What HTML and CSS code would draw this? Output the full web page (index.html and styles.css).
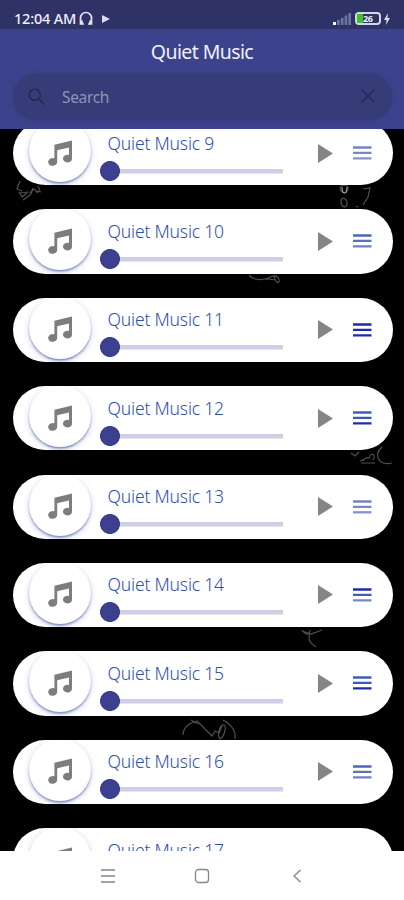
FILE: index.html
```
<!DOCTYPE html>
<html lang="en">
<head>
<meta charset="utf-8">
<title>Quiet Music</title>
<link rel="stylesheet" href="styles.css">
</head>
<body>
<svg class="defs" aria-hidden="true">
  <symbol id="note" viewBox="0 0 26 26"><path fill="#7d7d7d" d="M7.400 4.700 25 0.500V18.200a4.500 3.900 0 1 1-3-3.300V7.400L10.200 10.200V21.800A4.500 3.900 0 1 1 7.400 18.300Z"/></symbol>
  <symbol id="play" viewBox="0 0 15 19"><path fill="#858585" d="M0 0 15 9.500 0 19Z"/></symbol>
  <symbol id="menu" viewBox="0 0 19 14"><path class="l1" d="M0 1.500h18.500"/><path class="l2" d="M0 6.900h18.500"/><path class="l3" d="M0 12.300h18.500"/></symbol>
</svg>
<div class="phone">
  <header class="header">
    <div class="status">
      <span class="time">12:04 AM</span>
      <svg class="headset" viewBox="0 0 14 15"><path d="M5 13H1.500V7a5.500 5.500 0 0 1 11 0v6H9M3 9.500V13M11 9.500V13" fill="none" stroke="#e4e5f3" stroke-width="1.700"/></svg>
      <svg class="mini-play" viewBox="0 0 8 8"><path d="M0 0 8 4 0 8Z" fill="#d9daea"/></svg>
      <svg class="signal" viewBox="0 0 19 13"><path fill="#6f739f" d="M4 8h2.700v5H4zM7.800 6h2.700v7H7.800zM11.600 3.500h2.700V13h-2.700zM15.400 1H18v12h-2.600z"/><path fill="#fff" d="M0 10h3v3H0z"/></svg>
      <span class="battery"><span class="charge"></span><span class="percent">26</span></span>
      <svg class="bolt" viewBox="0 0 6 12"><path d="M4 0 0 7h2.500L2 12 6 5H3.500Z" fill="#d9daea"/></svg>
    </div>
    <h1 class="title">Quiet Music</h1>
    <div class="search">
      <svg class="search-icon" viewBox="0 0 18 18"><circle cx="6.800" cy="6.800" r="5.500"/><path d="m11 11 5.500 5.500"/></svg>
      <span class="placeholder">Search</span>
      <svg class="clear" viewBox="0 0 16 16"><path d="m1.500 1.500 13 13m0-13-13 13"/></svg>
    </div>
  </header>
  <main class="content">
    <svg class="doodles" viewBox="0 130 404 721">
      <path d="M20 181l-3 8 5 2m-3 1 3 5 5-4m-7 0 9-1m-6 8 7-5 2-5m-2 3 4-4 4 4m-5-5-2 6m5-3 5 1m-3-6 2 5"/>
      <path d="M340 188c0-4 9-4 8 1s-7 5-8-1m2 10c-4 8 6 13 5 4-1-5-5-3-5-4m14 8 2 1m5-18 7-1-2 9-5 8"/>
      <path class="bright" d="M342 187c0 8 5 8 5 0"/>
      <path d="M249 275c5 6 12 5 20 3m-3 2c7-6 12-5 13 0s-6 2-4-5m-7 4 8 1"/>
      <path d="m351 453 4 3 4-4m1 9c8-1 4-5 9-3 3-8 7-2 4 2m-12 3h14m7-16c-8 7-5 19 10 16"/>
      <path d="M302 630c4 6 8 5 8 0m-8 1 9 3 11-4m-12 3c-3 8 1 10 6 14"/>
      <path d="M183 735c0-9 9-13 14-14l15 15 3-5 4 2 3-7m-31-6 7 4m25-4c9 5 13 12 12 19m-15 0c-4-5 1-16 4-14s0 12-4 14"/>
    </svg>
    <div class="list">
      <article class="card"><span class="disc"><svg><use href="#note"/></svg></span><div class="track"><span class="name">Quiet Music 9</span><span class="slider"></span></div><svg class="play"><use href="#play"/></svg><svg class="menu pale"><use href="#menu"/></svg></article>
      <article class="card"><span class="disc"><svg><use href="#note"/></svg></span><div class="track"><span class="name">Quiet Music 10</span><span class="slider"></span></div><svg class="play"><use href="#play"/></svg><svg class="menu medium"><use href="#menu"/></svg></article>
      <article class="card"><span class="disc"><svg><use href="#note"/></svg></span><div class="track"><span class="name">Quiet Music 11</span><span class="slider"></span></div><svg class="play"><use href="#play"/></svg><svg class="menu dark"><use href="#menu"/></svg></article>
      <article class="card"><span class="disc"><svg><use href="#note"/></svg></span><div class="track"><span class="name">Quiet Music 12</span><span class="slider"></span></div><svg class="play"><use href="#play"/></svg><svg class="menu"><use href="#menu"/></svg></article>
      <article class="card"><span class="disc"><svg><use href="#note"/></svg></span><div class="track"><span class="name">Quiet Music 13</span><span class="slider"></span></div><svg class="play"><use href="#play"/></svg><svg class="menu pale"><use href="#menu"/></svg></article>
      <article class="card"><span class="disc"><svg><use href="#note"/></svg></span><div class="track"><span class="name">Quiet Music 14</span><span class="slider"></span></div><svg class="play"><use href="#play"/></svg><svg class="menu fading"><use href="#menu"/></svg></article>
      <article class="card"><span class="disc"><svg><use href="#note"/></svg></span><div class="track"><span class="name">Quiet Music 15</span><span class="slider"></span></div><svg class="play"><use href="#play"/></svg><svg class="menu"><use href="#menu"/></svg></article>
      <article class="card"><span class="disc"><svg><use href="#note"/></svg></span><div class="track"><span class="name">Quiet Music 16</span><span class="slider"></span></div><svg class="play"><use href="#play"/></svg><svg class="menu medium"><use href="#menu"/></svg></article>
      <article class="card"><span class="disc"><svg><use href="#note"/></svg></span><div class="track"><span class="name">Quiet Music 17</span><span class="slider"></span></div><svg class="play"><use href="#play"/></svg><svg class="menu"><use href="#menu"/></svg></article>
    </div>
  </main>
  <nav class="nav">
    <svg viewBox="0 0 16 16"><path d="M1 2h14M1 8h14M1 14h14"/></svg>
    <svg viewBox="0 0 16 16"><rect x="1.500" y="1.500" width="13" height="13" rx="3"/></svg>
    <svg viewBox="0 0 16 16"><path d="M11.500 2 5 8l6.500 6"/></svg>
  </nav>
</div>
</body>
</html>
```
FILE: styles.css
```
* { box-sizing: border-box; }
body { margin: 0; background: #000; font-family: "Noto Sans", sans-serif; }
.defs { position: absolute; width: 0; height: 0; }
.phone { width: 404px; height: 900px; display: flex; flex-direction: column; overflow: hidden; }
.header { flex: 0 0 129px; background: #3d428c; color: #eef0fb; }
.status { height: 29px; background: #2e3266; display: flex; align-items: center; padding: 8px 14px 0; }
.time { font-size: 14.5px; font-weight: 500; line-height: 20px; width: 63px; margin-top: -1px; letter-spacing: -0.2px; white-space: nowrap; }
.headset { width: 14px; height: 15px; margin: -1px 0 0 2px; }
.mini-play { width: 8px; height: 8px; margin-left: 9px; }
.signal { width: 19px; height: 13px; margin-left: auto; }
.battery { width: 26px; height: 13px; margin-left: 3px; border: 2px solid #d5d7e6; border-radius: 4px; display: flex; align-items: center; }
.charge { width: 6px; height: 9px; background: #43bd2c; }
.percent { font-size: 9px; line-height: 9px; font-weight: 700; letter-spacing: -0.5px; }
.bolt { width: 6px; height: 12px; margin: 0 0 0 3px; }
.title { margin: 9px 0 0; text-align: center; font-size: 19.5px; line-height: 27px; font-weight: 400; letter-spacing: -0.6px; }
.search { height: 46px; margin: 9px 12px 0 13px; border-radius: 23px; background: #373b77; box-shadow: 0 0 4px #373b77; display: flex; align-items: center; padding: 0 16px 0 15px; }
.search svg { fill: none; stroke: #252954; stroke-width: 1.6; }
.search-icon { width: 18px; height: 18px; }
.placeholder { margin-left: 16px; color: #9194b4; font-size: 15.5px; letter-spacing: -0.35px; }
.search .clear { width: 16px; height: 16px; margin: -2px 0 0 auto; }
.content { position: relative; flex: 1; overflow: hidden; background: #000; }
.doodles { position: absolute; inset: 1px 0 0; width: 404px; height: 721px; fill: none; stroke: #505050; stroke-width: 1.2; }
.bright { stroke: #999; }
.list { position: relative; display: flex; flex-direction: column; gap: 24.1px; margin: -8px 11.5px 0 12.5px; }
.card { height: 64.3px; flex: none; border-radius: 33px; background: #fff; overflow: hidden; display: flex; align-items: flex-start; }
.disc { width: 62px; height: 62px; margin: -1px 0 0 16.5px; flex: none; border-radius: 50%; background: #fff; box-shadow: 0 2px 2.5px -0.5px #7484b8, 0 2px 7px #d5d9ec; display: flex; align-items: center; justify-content: center; }
.disc svg { width: 26px; height: 26px; margin-top: 3px; }
.track { width: 183px; margin-left: 8.5px; display: flex; flex-direction: column; }
.name { margin: 8.5px 0 0 8px; height: 26px; font-size: 17.5px; line-height: 26px; font-weight: 300; letter-spacing: -0.18px; color: #2e50ad; white-space: nowrap; }
.slider { height: 20px; margin-top: 5px; background: radial-gradient(circle at 10px 10px, #3c408e 9.6px, transparent 10.3px), linear-gradient(#cfcee5, #cfcee5) 12px 8px / 171px 4.5px no-repeat; border-radius: 3px; }
.play { width: 15px; height: 19px; margin: 22.5px 0 0 35.5px; flex: none; }
.menu { width: 19px; height: 14px; margin: 25px 0 0 19.5px; flex: none; stroke-width: 2.3; --a: #3f5cb8; --b: #3a58b8; --c: #1f2da5; }
.l1 { stroke: var(--a); }
.l2 { stroke: var(--b); }
.l3 { stroke: var(--c); }
.pale { --a: #7684c6; --b: #7786c8; --c: #8490cf; }
.medium { --a: #4c66b8; --b: #5b70bf; --c: #6f80c8; }
.dark { --a: #1e2ba8; --b: #1e2ba8; --c: #1e2ba8; }
.fading { --a: #1e2ba8; --b: #4060b8; --c: #7886cb; }
.nav { flex: 0 0 49px; background: #fff; display: flex; justify-content: center; align-items: center; gap: 78.5px; padding-top: 1px; }
.nav svg { width: 16px; height: 16px; fill: none; stroke: #858585; stroke-width: 1.3; }
```
